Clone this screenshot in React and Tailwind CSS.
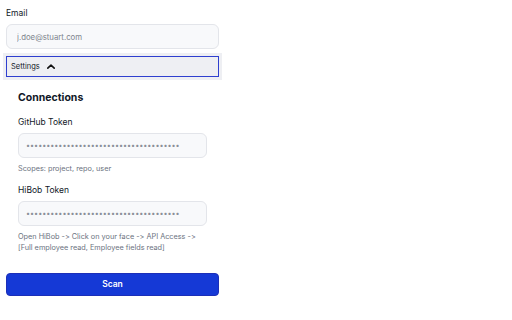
import { useState } from "react";

function TokenField({ label, value, hint }) {
  return (
    <div className="flex flex-col">
      <label className="text-[8.5px] leading-[12px] text-[#111827] mt-[10px]">{label}</label>
      <input
        type="password"
        readOnly
        value={value}
        className="mt-[5px] h-[25px] w-[189px] rounded-md border border-[#e3e5ea] bg-[#f8f9fb] px-[7px] text-[7.2px] text-[#8a8f98] outline-none"
      />
      <div className="mt-[5px] text-[7.3px] leading-[11px] text-[#6b7280]">{hint}</div>
    </div>
  );
}

export default function App() {
  const [open, setOpen] = useState(true);

  return (
    <div className="w-[512px] h-[320px] bg-white font-['Inter',sans-serif] [font-feature-settings:'calt'_0] px-[6px] pt-[7px]">
      <div className="w-[213px] flex flex-col">
        <label className="text-[8.5px] leading-[12px] text-[#111827]">Email</label>
        <input
          type="email"
          placeholder="j.doe@stuart.com"
          className="mt-[5px] h-[25px] w-full rounded-md border border-[#e3e5ea] bg-[#f8f9fb] px-[10px] text-[7.8px] text-[#374151] placeholder:text-[#80858e] outline-none"
        />

        <div className="mt-[4px] -mx-[3px] bg-[#eeeff3] p-[3px]">
          <button
            type="button"
            onClick={() => setOpen(!open)}
            className="flex h-[21px] w-full items-center gap-[7px] border border-[#2f3fcf] bg-[#eeeff3] px-[4px] text-[7.5px] text-[#111827]"
          >
            Settings
            <svg width="8" height="5" viewBox="0 0 10 6" fill="none" className={open ? "" : "rotate-180"}>
              <path d="M1 5L5 1.2L9 5" stroke="#111" strokeWidth="2" strokeLinecap="round" strokeLinejoin="round" />
            </svg>
          </button>
        </div>

        {open && (
          <div className="pl-[12px] flex flex-col">
            <h2 className="mt-[10px] text-[10.5px] leading-[16px] font-bold text-[#111827]">Connections</h2>
            <TokenField
              label="GitHub Token"
              value={"x".repeat(38)}
              hint="Scopes: project, repo, user"
            />
            <TokenField
              label="HiBob Token"
              value={"x".repeat(38)}
              hint={
                <>
                  Open HiBob -&gt; Click on your face -&gt; API Access -&gt;
                  <br />
                  [Full employee read, Employee fields read]
                </>
              }
            />
          </div>
        )}

        <button
          type="button"
          className="mt-[20px] h-[23px] w-full rounded-[4px] border border-[#1c2fb8] bg-[#1539d6] text-[8.5px] font-semibold text-white"
        >
          Scan
        </button>
      </div>
    </div>
  );
}
